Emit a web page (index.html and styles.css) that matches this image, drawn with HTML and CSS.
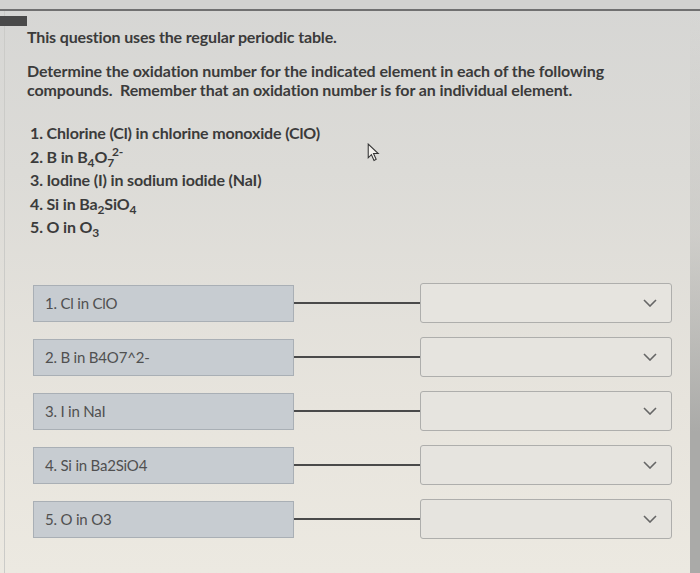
FILE: index.html
```html
<!DOCTYPE html>
<html>
<head>
<meta charset="utf-8">
<link rel="stylesheet" href="styles.css">
</head>
<body>
<div class="screen">
  <div class="topline"></div>
  <div class="tab"></div>
  <div class="panel">
    <p class="intro">This question uses the regular periodic table.</p>
    <p class="instr">Determine the oxidation number for the indicated element in each of the following compounds.&nbsp; Remember that an oxidation number is for an individual element.</p>
    <ol class="items">
      <li>1. Chlorine (Cl) in chlorine monoxide (ClO)</li>
      <li>2. B in B<sub>4</sub>O<sub>7</sub><sup>2-</sup></li>
      <li>3. Iodine (I) in sodium iodide (NaI)</li>
      <li>4. Si in Ba<sub>2</sub>SiO<sub>4</sub></li>
      <li>5. O in O<sub>3</sub></li>
    </ol>
    <div class="matches">
      <div class="row"><div class="prompt">1. Cl in ClO</div><div class="link"></div><div class="select"><svg class="chev" viewBox="0 0 14 8" width="14" height="8"><path d="M1 1 L7 7 L13 1" fill="none" stroke="#666" stroke-width="1.6"/></svg></div></div>
      <div class="row"><div class="prompt">2. B in B4O7^2-</div><div class="link"></div><div class="select"><svg class="chev" viewBox="0 0 14 8" width="14" height="8"><path d="M1 1 L7 7 L13 1" fill="none" stroke="#666" stroke-width="1.6"/></svg></div></div>
      <div class="row"><div class="prompt">3. I in NaI</div><div class="link"></div><div class="select"><svg class="chev" viewBox="0 0 14 8" width="14" height="8"><path d="M1 1 L7 7 L13 1" fill="none" stroke="#666" stroke-width="1.6"/></svg></div></div>
      <div class="row"><div class="prompt">4. Si in Ba2SiO4</div><div class="link"></div><div class="select"><svg class="chev" viewBox="0 0 14 8" width="14" height="8"><path d="M1 1 L7 7 L13 1" fill="none" stroke="#666" stroke-width="1.6"/></svg></div></div>
      <div class="row"><div class="prompt">5. O in O3</div><div class="link"></div><div class="select"><svg class="chev" viewBox="0 0 14 8" width="14" height="8"><path d="M1 1 L7 7 L13 1" fill="none" stroke="#666" stroke-width="1.6"/></svg></div></div>
    </div>
  </div>
  <svg class="cursor" viewBox="0 0 12 18" width="13" height="19"><path d="M1 1 L1 14 L4 11 L6.5 16.5 L8.5 15.5 L6 10 L10.5 10 Z" fill="#f4f2ee" stroke="#333" stroke-width="1"/></svg>
  <div class="edge"></div>
</div>
</body>
</html>
```
FILE: styles.css
```css
html, body {
  margin: 0;
  padding: 0;
}
body {
  width: 700px;
  height: 573px;
  overflow: hidden;
  font-family: Lato, "Open Sans", sans-serif;
  color: #333;
}
.screen {
  position: relative;
  width: 700px;
  height: 573px;
  background: linear-gradient(180deg, #d6d6d4 0%, #dcdbd7 30%, #e7e4dd 70%, #ece9e1 100%);
  overflow: hidden;
}
.topline {
  height: 9px;
  border-bottom: 2px solid #707070;
  background: #d2d2d0;
}
.tab {
  position: absolute;
  left: 0;
  top: 16px;
  width: 27px;
  height: 10px;
  background: #4a4a4a;
}
.panel {
  margin-left: 4px;
  border-left: 1px solid #cbcbc8;
  padding: 0 0 0 22px;
  height: 562px;
}
.intro {
  margin: 0;
  padding-top: 16px;
  font-size: 16px;
  font-weight: 700;
  color: #3b3b3b;
  letter-spacing: -0.15px;
  line-height: 19px;
}
.instr {
  margin: 16px 0 0;
  width: 620px;
  font-size: 16px;
  font-weight: 700;
  color: #3b3b3b;
  letter-spacing: -0.1px;
  line-height: 18.5px;
}
.items {
  list-style: none;
  margin: 22px 0 0;
  padding: 0 0 0 3px;
  font-size: 16px;
  font-weight: 700;
  color: #3b3b3b;
  letter-spacing: -0.15px;
}
.items li {
  line-height: 23.5px;
  height: 23.5px;
}
.items sub, .items sup {
  font-size: 12px;
  line-height: 0;
}
.items sub {
  vertical-align: -4px;
}
.items sup {
  vertical-align: 7px;
  margin-left: -2px;
}
.matches {
  margin-top: 46px;
  display: flex;
  flex-direction: column;
  gap: 17px;
  padding-left: 6px;
}
.row {
  display: flex;
  align-items: center;
  height: 37px;
}
.prompt {
  box-sizing: border-box;
  width: 261px;
  height: 37px;
  padding-left: 11px;
  display: flex;
  align-items: center;
  background: #c7ccd1;
  border: 1px solid #a9afb5;
  font-size: 15px;
  color: #505050;
  letter-spacing: -0.2px;
}
.link {
  width: 126px;
  height: 2px;
  background: #4a4a4a;
}
.select {
  box-sizing: border-box;
  width: 252px;
  height: 40px;
  border: 1px solid #aeaeac;
  border-radius: 3px;
  background: #e6e4df;
  display: flex;
  align-items: center;
  justify-content: flex-end;
  padding-right: 14px;
}
.cursor {
  position: absolute;
  left: 367px;
  top: 143px;
}
.edge {
  position: absolute;
  right: 0;
  top: 12px;
  width: 10px;
  height: 561px;
  background: linear-gradient(180deg, rgba(180,180,178,0) 0%, rgba(180,180,178,0.4) 40%, rgba(170,170,168,1) 75%);
}
```
